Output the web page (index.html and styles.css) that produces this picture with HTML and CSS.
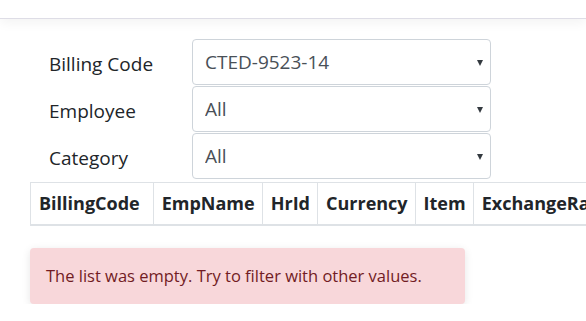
FILE: index.html
```html
<!DOCTYPE html>
<html lang="en">
<head>
    <meta charset="UTF-8">
    <meta name="viewport" content="width=device-width, initial-scale=1.0">
    <title>Expenses</title>
    <link rel="stylesheet" href="styles.css">
</head>
<body>
    <header class="navbar"></header>

    <main class="container">
        <form class="filters">
            <label for="billingCode">Billing Code</label>
            <div class="select-wrap">
                <select id="billingCode">
                    <option>CTED-9523-14</option>
                </select>
            </div>

            <label for="employee">Employee</label>
            <div class="select-wrap">
                <select id="employee">
                    <option>All</option>
                </select>
            </div>

            <label for="category">Category</label>
            <div class="select-wrap">
                <select id="category">
                    <option>All</option>
                </select>
            </div>
        </form>

        <table class="results">
            <thead>
                <tr>
                    <th class="col-code">BillingCode</th>
                    <th>EmpName</th>
                    <th>HrId</th>
                    <th>Currency</th>
                    <th>Item</th>
                    <th>ExchangeRate</th>
                    <th>Amount</th>
                </tr>
            </thead>
        </table>

        <div class="alert">The list was empty. Try to filter with other values.</div>
    </main>
</body>
</html>
```

FILE: styles.css
```css
html, body {
    margin: 0;
    overflow: hidden;
}

body {
    font-family: "Open Sans", "Noto Sans", sans-serif;
    color: #212529;
    background: #fff;
}

.navbar {
    height: 18px;
    border-bottom: 1px solid #dedde6;
    box-shadow: 0 4px 12px rgba(0, 0, 0, 0.05);
}

.container {
    padding: 20px 30px 0;
}

.filters {
    display: grid;
    grid-template-columns: 162px 299px;
    row-gap: 1px;
    align-items: center;
}

.filters label {
    padding: 3px 0 0 19px;
    font-size: 19px;
}

.select-wrap {
    position: relative;
}

.select-wrap::after {
    content: "";
    position: absolute;
    right: 8px;
    top: 21px;
    border-left: 3.5px solid transparent;
    border-right: 3.5px solid transparent;
    border-top: 6px solid #343a40;
    pointer-events: none;
}

.filters select {
    display: block;
    width: 100%;
    height: 46px;
    padding: 0 12px;
    font-family: inherit;
    font-size: 19px;
    color: #495057;
    background: #fff;
    border: 1px solid #ced4da;
    border-radius: 4px;
    appearance: none;
    -webkit-appearance: none;
}

.results {
    margin-top: 3px;
    border-collapse: collapse;
    white-space: nowrap;
}

.results th {
    padding: 8px 7px 8px 8px;
    font-size: 18px;
    font-weight: 700;
    line-height: 25px;
    text-align: left;
    border: 1px solid #dee2e6;
    border-bottom-width: 2px;
}

.results .col-code {
    padding-right: 13px;
}

.alert {
    width: 403px;
    margin-top: 22px;
    padding: 0 16px;
    height: 56px;
    line-height: 56px;
    font-size: 16.5px;
    color: #721c24;
    background: #f8d7da;
    border-radius: 4px;
    box-shadow: 0 2px 8px rgba(0, 0, 0, 0.1);
}
```
